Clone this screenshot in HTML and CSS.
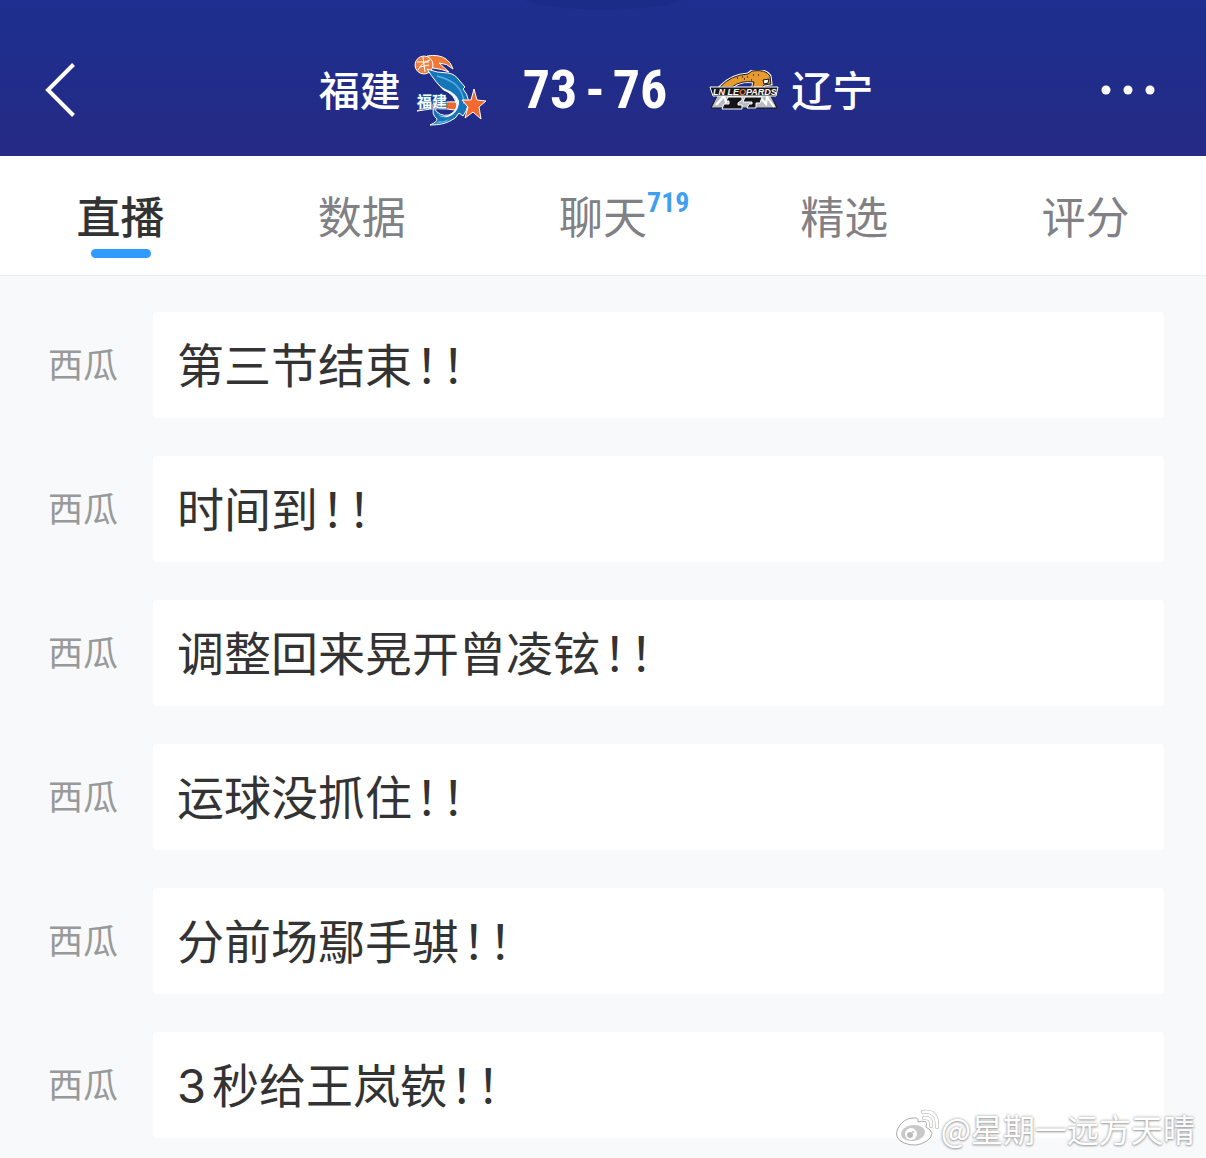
FILE: index.html
```html
<!DOCTYPE html>
<html lang="zh-CN">
<head>
<meta charset="utf-8">
<meta name="viewport" content="width=device-width, initial-scale=1">
<title>福建 73 - 76 辽宁</title>
<link rel="stylesheet" href="styles.css">
</head>
<body>
<header class="topbar">
  <button class="icon-btn back" type="button" aria-label="返回">
    <svg width="30" height="54" viewBox="0 0 30 54" fill="none" stroke="#fff" stroke-width="4"><path d="M28.500 1.500 3 27l25.500 25.500"/></svg>
  </button>
  <div class="match">
    <span class="team">福建</span>
    <svg class="logo-fj" width="74" height="72" viewBox="0 0 74 72" aria-hidden="true">
      <path d="M14 2Q26 0 33 5Q38 8 40 15Q34 9 26 9L36 18Q29 15 20 14Z" fill="#f07a35" stroke="#fff"/>
      <circle cx="11" cy="11" r="9" fill="#f0803d" stroke="#fff"/>
      <path d="M4 8h12M7 13l9-2M10 3l2 15M5 16Q9 8 17 6" fill="none" stroke="#fff"/>
      <path d="M4 57Q26 46 46 48L42 56Q26 53 4 57Z" fill="#ee6930" stroke="#fff"/>
      <path d="M14 15Q24 19 35 19Q42 20 46 26L52 33 50 35Q59 45 53 57L50 62 46 59Q43 65 37 67Q30 71 17 71Q24 68 24 65Q18 60 21 54Q26 63 36 61Q48 56 42 46Q39 39 31 36Q23 29 14 15Z" fill="#1675b8" stroke="#fff"/>
      <path d="M21 26Q28 34 37 37Q47 43 46 50Q44 60 35 63Q28 64 25 61Q32 65 39 59Q46 53 42 45Q38 39 30 36Z" fill="#eef8fd"/>
      <path d="M24 22Q36 25 43 31Q51 39 51 50" fill="none" stroke="#55b1e0" stroke-width="1.500"/>
      <path d="M26 67Q33 68 38 63L33 68 21 70Z" fill="#55b1e0"/>
      <text class="logo-cn" x="4" y="53">福建</text>
      <path d="m61 35 3 11 9 1-7 6 2 12-8-7-8 6 3-11-6-7h9Z" fill="#f26a2f" stroke="#fff"/>
    </svg>
    <strong class="score"><span>73</span><span>-</span><span>76</span></strong>
    <svg class="logo-ln" width="70" height="40" viewBox="0 0 70 40" aria-hidden="true">
      <path d="M2 38 9 24 24 18h29l9 8 6 12Z" fill="#b8bdc4" stroke="#111"/>
      <path d="M7 35l8-9 2 6 5-7M50 26l7 8 1-7 7 10" fill="none" stroke="#fff" stroke-width="2"/>
      <path d="M11 17Q22 5 39 4L43 1Q57-1 61 6l1 8-7 1-5 6-7-1 2-8Q32 10 23 17Z" fill="#e79b2e" stroke="#fff" stroke-width="3"/>
      <path d="M11 17Q22 5 39 4L43 1Q57-1 61 6l1 8-7 1-5 6-7-1 2-8Q32 10 23 17Z" fill="#e79b2e" stroke="#171717"/>
      <path d="M28 8h1m4-1h1m4 0h1m5-2h1m4 0h1m-15 4h1m6 1h1" stroke="#68411b" stroke-width="2"/>
      <path d="m54 10 6-1-1 4-4 1Z" fill="#fff" stroke="#111"/>
      <path d="M1 17h68l-2 9H4Z" fill="#17171b" stroke="#fff"/>
      <text class="logo-en" x="4" y="25">LN LE<tspan fill="#e57a34">O</tspan>PARDS</text>
      <path d="M19 27h14v3l-4 3v2h4v4H13l2-5h5v-3h-3ZM36 27h17l-2 6h-4v5h-9l2-4h3v-2h-9Z" fill="#131318" stroke="#fff"/>
    </svg>
    <span class="team">辽宁</span>
  </div>
  <button class="icon-btn" type="button" aria-label="更多">
    <svg width="54" height="10" viewBox="0 0 54 10" fill="#fff"><circle cx="5" cy="5" r="4.500"/><circle cx="27" cy="5" r="4.500"/><circle cx="49" cy="5" r="4.500"/></svg>
  </button>
</header>
<nav class="tabs">
  <a class="tab active" href="#live" aria-current="page">直播</a>
  <a class="tab" href="#data">数据</a>
  <a class="tab" href="#chat"><span class="tab-label">聊天<span class="count">719</span></span></a>
  <a class="tab" href="#picks">精选</a>
  <a class="tab" href="#rating">评分</a>
</nav>
<main class="feed" id="live">
  <article class="entry"><span class="author">西瓜</span><p class="message">第三节结束<span class="bang">！</span><span class="bang">！</span></p></article>
  <article class="entry"><span class="author">西瓜</span><p class="message">时间到<span class="bang">！</span><span class="bang">！</span></p></article>
  <article class="entry"><span class="author">西瓜</span><p class="message">调整回来晃开曾凌铉<span class="bang">！</span><span class="bang">！</span></p></article>
  <article class="entry"><span class="author">西瓜</span><p class="message">运球没抓住<span class="bang">！</span><span class="bang">！</span></p></article>
  <article class="entry"><span class="author">西瓜</span><p class="message">分前场鄢手骐<span class="bang">！</span><span class="bang">！</span></p></article>
  <article class="entry"><span class="author">西瓜</span><p class="message"><span class="digit">3</span>秒给王岚嵚<span class="bang">！</span><span class="bang">！</span></p></article>
</main>
<div class="watermark">
  <svg width="44" height="38" viewBox="0 0 44 38" aria-hidden="true">
    <path d="M18 9Q9 9 3 19Q-2 29 9 34Q21 39 32 32Q42 24 31 18Q34 10 23 13Q24 8 18 9Z" fill="#fff" stroke="#aaa"/>
    <ellipse cx="18" cy="24" rx="12" ry="8" fill="#c9c9c9" transform="rotate(-8 18 24)"/>
    <circle cx="16" cy="25" r="6" fill="#fff"/><circle cx="15" cy="26" r="3" fill="#bbb"/><circle cx="18" cy="23" r="1" fill="#bbb"/>
    <path d="M29 9Q37 8 36 17M28 3Q43 1 42 18" fill="none" stroke="#aaa" stroke-width="4" stroke-linecap="round"/>
    <path d="M29 9Q37 8 36 17M28 3Q43 1 42 18" fill="none" stroke="#fff" stroke-width="3" stroke-linecap="round"/>
  </svg>
  <span>@星期一远方天晴</span>
</div>
</body>
</html>
```

FILE: styles.css
```css
* { box-sizing: border-box; }

body {
  position: relative;
  margin: 0;
  background: #f7f9fb;
  color: #333;
  font-family: "Noto Sans CJK SC", sans-serif;
}

.topbar {
  display: flex;
  align-items: center;
  justify-content: space-between;
  height: 156px;
  padding: 24px 51px 0 45px;
  background:
    radial-gradient(ellipse 80px 10px at 50% 0, #1b2c88 90%, transparent),
    linear-gradient(#1d2f8f, #252a85);
  color: #fff;
}

.icon-btn {
  display: flex;
  align-items: center;
  padding: 0;
  border: 0;
  background: none;
}

.back { width: 46px; }

.match {
  display: flex;
  align-items: center;
}

.team {
  padding-bottom: 4px;
  font-size: 41px;
  font-weight: 500;
  line-height: 60px;
}

.logo-fj { margin: 0 36px 0 12px; }
.logo-ln { margin: 0 12px 0 42px; }

.logo-cn {
  fill: #fff;
  font: 700 15px "Noto Sans CJK SC", sans-serif;
  stroke: #1675b8;
  stroke-width: 1px;
  paint-order: stroke;
}

.logo-en {
  fill: #fff;
  font: italic 700 9px "Liberation Sans", sans-serif;
}

.score {
  display: flex;
  gap: 8px;
  font-family: "Roboto Condensed", Roboto, sans-serif;
  font-size: 54px;
  font-weight: 700;
  line-height: 60px;
}

.tabs {
  display: grid;
  grid-template-columns: repeat(5, 1fr);
  height: 120px;
  border-bottom: 1px solid #ebedf0;
  background: #fff;
}

.tab {
  display: flex;
  flex-direction: column;
  align-items: center;
  gap: 4px;
  padding-top: 29px;
  color: #808085;
  font-size: 44px;
  line-height: 60px;
  text-decoration: none;
}

.active {
  color: #333;
  font-weight: 500;
}

.active::after {
  width: 60px;
  height: 9px;
  border-radius: 5px;
  background: #2f9bff;
  content: "";
}

.tab-label { position: relative; }

.count {
  position: absolute;
  top: 0;
  left: 100%;
  color: #419ff0;
  font-family: "Roboto Condensed", Roboto, sans-serif;
  font-size: 28px;
  font-weight: 700;
  line-height: 36px;
}

.feed {
  display: grid;
  gap: 38px;
  padding: 36px 42px 20px 48px;
}

.entry {
  display: grid;
  grid-template-columns: 105px 1fr;
  align-items: center;
}

.author {
  padding-bottom: 4px;
  color: #999;
  font-size: 35px;
  line-height: 52px;
}

.message {
  margin: 0;
  padding: 16px 24px 20px;
  border-radius: 4px;
  background: #fff;
  font-size: 47px;
  line-height: 70px;
}

.bang {
  margin-left: 3px;
  font-feature-settings: "halt";
}

.digit {
  margin-right: 6px;
  font-family: Inter, sans-serif;
  line-height: 1;
}

.watermark {
  position: absolute;
  right: 11px;
  bottom: 8px;
  display: flex;
  align-items: center;
  gap: 2px;
  color: #fff;
  font-size: 32px;
  line-height: 44px;
  text-shadow: 0 0 3px #999, 0 1px 2px #aaa;
}
```
